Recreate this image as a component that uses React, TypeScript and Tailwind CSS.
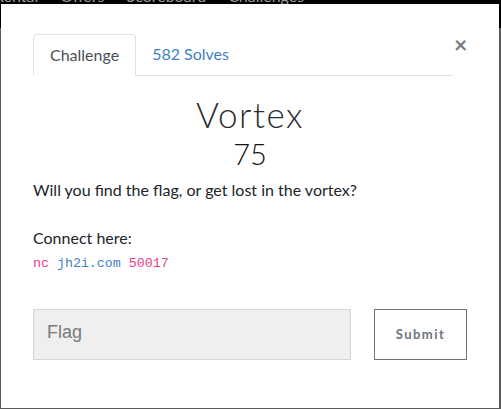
import React from "react";

export default function App() {
  return (
    <div className="w-[501px] h-[409px] overflow-hidden bg-[linear-gradient(to_bottom,#000_28px,#5a5a5a_28px)] relative" style={{ fontFamily: "Lato, 'Noto Sans', sans-serif" }}>
      <div className="absolute top-0 left-0 w-full h-[4px] overflow-hidden">
        <div className="flex gap-[22px] text-[16px] leading-[16px] text-[#9a9a9a] -mt-[12px] -ml-[6px]">
          <span>Rental</span>
          <span>Offers</span>
          <span>Scoreboard</span>
          <span>Challenges</span>
        </div>
      </div>
      <div className="absolute left-[1px] top-[4px] w-[498px] h-[404px] bg-white px-[32px] pt-[30px]">
        <div className="flex items-start">
          <div className="flex flex-1 border-b border-[#dee2e6] h-[42px]">
            <div className="border border-[#dee2e6] border-b-white rounded-t-[4px] px-[16px] py-[8px] text-[16px] leading-[24px] text-[#495057] bg-white h-[42px]">
              Challenge
            </div>
            <div className="px-[16px] py-[8px] text-[16px] leading-[24px] text-[#3f82c4]">582 Solves</div>
          </div>
          <div className="w-[13px] ml-[1px] -mt-[2px] text-[23px] font-bold leading-[24px] text-[#7a7a7a]">×</div>
        </div>
        <div className="text-center text-[35px] font-light leading-[40px] text-[#2a2d31] mt-[18px] tracking-[1.5px]">Vortex</div>
        <div className="text-center text-[29px] font-light leading-[36px] text-[#111418] mt-[2px]">75</div>
        <p className="text-[16px] leading-[24px] text-[#212529] mt-[6px]">Will you find the flag, or get lost in the vortex?</p>
        <p className="text-[16px] leading-[24px] text-[#212529] mt-[24px]">Connect here:</p>
        <p className="text-[13.3px] leading-[20px] mt-[4px]" style={{ fontFamily: "'Liberation Mono', monospace" }}>
          <span className="text-[#e83e8c]">nc</span> <span className="text-[#3f82c4]">jh2i.com</span> <span className="text-[#e83e8c]">50017</span>
        </p>
        <div className="flex mt-[35px] items-start">
          <div className="w-[318px] h-[51px] bg-[#efefef] border border-[#d3d8df] flex items-center pl-[13px] pb-[5px] text-[18px] text-[#7a7a7a]" style={{ fontFamily: "'Liberation Sans', Arial, sans-serif" }}>
            Flag
          </div>
          <div className="ml-[23px] w-[93px] h-[51px] border border-[#6c757d] flex items-center justify-center text-[13px] font-bold tracking-[1.5px] text-[#6c757d]">
            Submit
          </div>
        </div>
      </div>
    </div>
  );
}
